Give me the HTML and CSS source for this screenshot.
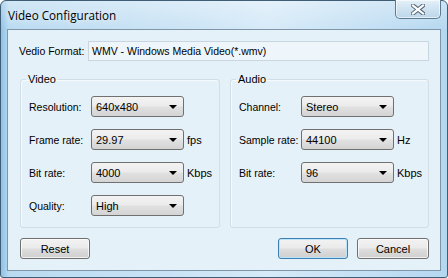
FILE: index.html
```html
<!DOCTYPE html>
<html>
<head>
<meta charset="utf-8">
<link rel="stylesheet" href="styles.css">
</head>
<body>
<div class="window">
  <div class="titlebar">
    <span class="title">Video Configuration</span>
    <div class="close">
      <svg width="14" height="11" viewBox="0 0 14 11">
        <path d="M2 1.5 L12 9.5 M12 1.5 L2 9.5" stroke="#55677a" stroke-width="4.2" stroke-linecap="square"/>
        <path d="M2 1.5 L12 9.5 M12 1.5 L2 9.5" stroke="#ffffff" stroke-width="2.2" stroke-linecap="square"/>
      </svg>
    </div>
  </div>
  <div class="client">
    <div class="format-row">
      <span class="format-label">Vedio Format:</span>
      <div class="textbox">WMV - Windows Media Video(*.wmv)</div>
    </div>
    <div class="groups">
      <fieldset class="group">
        <legend>Video</legend>
        <div class="row"><span class="lbl">Resolution:</span><div class="combo"><span>640x480</span><i class="arrow"></i></div></div>
        <div class="row"><span class="lbl">Frame rate:</span><div class="combo"><span>29.97</span><i class="arrow"></i></div><span class="unit">fps</span></div>
        <div class="row"><span class="lbl">Bit rate:</span><div class="combo"><span>4000</span><i class="arrow"></i></div><span class="unit">Kbps</span></div>
        <div class="row"><span class="lbl">Quality:</span><div class="combo"><span>High</span><i class="arrow"></i></div></div>
      </fieldset>
      <fieldset class="group">
        <legend>Audio</legend>
        <div class="row"><span class="lbl">Channel:</span><div class="combo"><span>Stereo</span><i class="arrow"></i></div></div>
        <div class="row"><span class="lbl">Sample rate:</span><div class="combo"><span>44100</span><i class="arrow"></i></div><span class="unit">Hz</span></div>
        <div class="row"><span class="lbl">Bit rate:</span><div class="combo"><span>96</span><i class="arrow"></i></div><span class="unit">Kbps</span></div>
      </fieldset>
    </div>
    <div class="buttons">
      <button class="btn">Reset</button>
      <div class="right-buttons">
        <button class="btn default">OK</button>
        <button class="btn">Cancel</button>
      </div>
    </div>
  </div>
</div>
</body>
</html>
```
FILE: styles.css
```css
* { box-sizing: border-box; }
html, body { margin: 0; padding: 0; }
body {
  width: 448px;
  height: 278px;
  overflow: hidden;
  font-family: "Liberation Sans", Arial, sans-serif;
  font-size: 10.5px;
  color: #000;
  background: #fff;
}
.window {
  width: 448px;
  height: 278px;
  border: 1px solid #3f5d75;
  border-radius: 6px 6px 3px 3px;
  padding: 0 6px 6px 6px;
  background:
    linear-gradient(to bottom, rgba(255,255,255,0.35), rgba(255,255,255,0) 30px),
    linear-gradient(to right, #8fc2e6 0px, #b9daf1 8px, #cae3f5 40%, #d6eaf8 60%, #b4d7f0 100%);
  display: flex;
  flex-direction: column;
}
.titlebar {
  height: 28px;
  display: flex;
  justify-content: space-between;
  align-items: flex-start;
}
.title {
  font-family: "Open Sans", "Liberation Sans", sans-serif;
  font-size: 11.7px;
  padding-top: 6px;
  padding-left: 1px;
  color: #000;
  text-shadow: 0 0 6px rgba(255,255,255,0.9);
}
.close {
  width: 46px;
  height: 19px;
  margin-top: -1px;
  border: 1px solid #5b7b93;
  border-top: none;
  border-radius: 0 0 5px 5px;
  background: linear-gradient(to bottom, #e4f0f8, #cfe3f1 50%, #bcd6ea);
  box-shadow: inset 0 0 0 1px rgba(255,255,255,0.6);
  display: flex;
  align-items: center;
  justify-content: center;
}
.client {
  flex: 1;
  border: 1px solid #7f96a8;
  background: #e5f1f9;
  padding: 11px 11px 0 11px;
}
.format-row {
  display: flex;
  align-items: center;
  height: 20px;
}
.format-label {
  width: 69px;
}
.textbox {
  flex: 1;
  height: 20px;
  border: 1px solid #c9d6e0;
  background: #eef6fb;
  padding: 3px 0 0 3px;
  white-space: nowrap;
}
.groups {
  display: grid;
  grid-template-columns: 200px 199px;
  column-gap: 10px;
  margin-top: 11px;
  padding-left: 1px;
}
.group {
  margin: 0;
  height: 156px;
  border: 1px solid #d2dde6;
  border-radius: 3px;
  box-shadow: inset 1px 1px 0 #f5fafd;
  padding: 10px 0 0 8px;
  min-width: 0;
}
.group legend {
  padding: 0 2px;
  margin-left: -3px;
  font-size: 11px;
  line-height: 14px;
}
.row {
  display: flex;
  align-items: center;
  height: 21px;
  margin-bottom: 12px;
}
.lbl {
  width: 62px;
  white-space: nowrap;
}
.combo {
  width: 93px;
  height: 21px;
  border: 1px solid #707070;
  border-radius: 3px;
  background: linear-gradient(to bottom, #f3f3f3 0%, #ececec 45%, #e0e0e0 55%, #d4d4d4 100%);
  display: flex;
  align-items: center;
  justify-content: space-between;
  padding: 0 6px 0 4px;
  font-size: 11px;
}
.arrow {
  width: 0;
  height: 0;
  border-left: 4px solid transparent;
  border-right: 4px solid transparent;
  border-top: 4px solid #000;
}
.unit {
  margin-left: 3px;
  font-size: 11px;
}
.buttons {
  display: flex;
  justify-content: space-between;
  margin-top: 10px;
  padding-left: 1px;
}
.right-buttons {
  display: flex;
  gap: 9px;
}
.btn {
  font-family: "Liberation Sans", Arial, sans-serif;
  font-size: 11px;
  color: #000;
  height: 21px;
  width: 72px;
  border: 1px solid #707070;
  border-radius: 3px;
  background: linear-gradient(to bottom, #f2f2f2 0%, #ebebeb 45%, #dddddd 55%, #cfcfcf 100%);
  box-shadow: inset 0 0 0 1px rgba(255,255,255,0.7);
  padding: 0;
}
.btn:first-child { width: 70px; }
.btn.default {
  border-color: #3c7fb1;
  box-shadow: inset 0 0 0 1px #bce4fa;
}
```
